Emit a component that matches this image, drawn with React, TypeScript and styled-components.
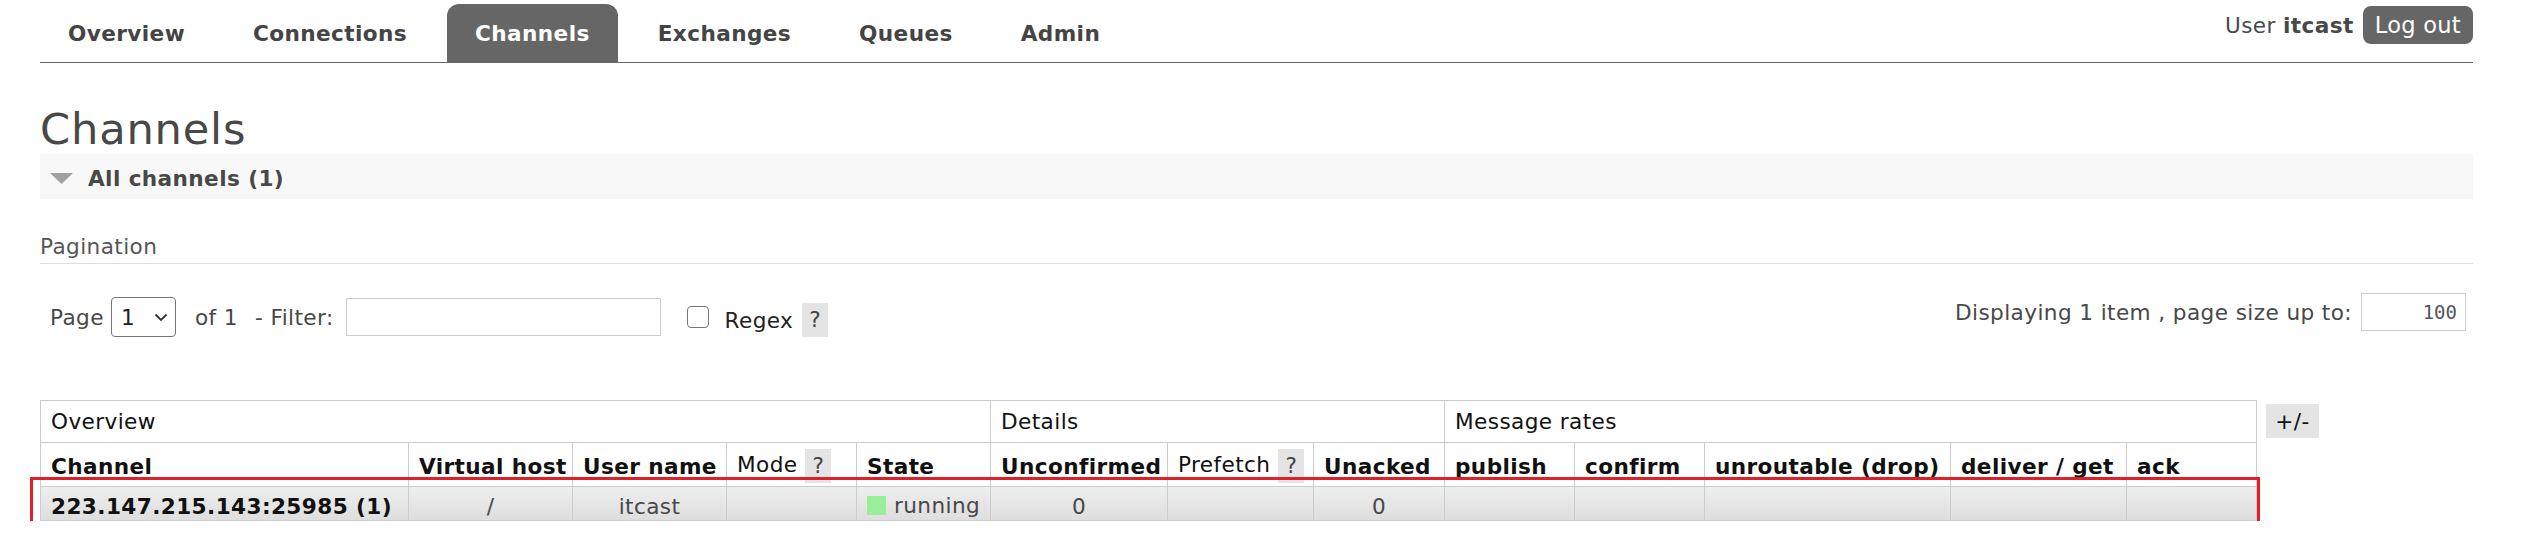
import React from 'react';
import styled, { createGlobalStyle } from 'styled-components';

const GlobalStyle = createGlobalStyle`
  html, body { margin: 0; padding: 0; background: #fff; }
  body {
    font-family: "DejaVu Sans", Verdana, sans-serif;
    font-size: 21.6px;
    letter-spacing: 0.4px;
    color: #484848;
  }
  * { box-sizing: border-box; }
`;

const Page = styled.div`
  width: 2536px;
  padding: 0 63px 0 40px;
`;

const Header = styled.header`
  display: flex;
  justify-content: space-between;
  align-items: flex-start;
  padding-top: 4px;
  border-bottom: 1px solid #666;
`;

const Menu = styled.nav`
  display: flex;
  gap: 12px;
`;

const MenuItem = styled.a<{ $active?: boolean }>`
  display: block;
  padding: 17px 28px 16px;
  line-height: 25px;
  font-weight: bold;
  color: ${(p) => (p.$active ? '#fff' : '#444')};
  background: ${(p) => (p.$active ? '#666' : 'transparent')};
  border-radius: 12px 12px 0 0;
  text-decoration: none;
`;

const UserBox = styled.div`
  display: flex;
  align-items: center;
  gap: 9px;
  margin-top: 2px;
  line-height: 25px;
`;

const UserName = styled.b`
  font-weight: bold;
`;

const LogoutButton = styled.button`
  font-family: inherit;
  font-size: 22.5px;
  letter-spacing: 0.3px;
  color: #fff;
  background: #666;
  border: none;
  border-radius: 8px;
  height: 38px;
  padding: 0 12px;
`;

const Title = styled.h1`
  font-size: 43.2px;
  letter-spacing: 0.8px;
  font-weight: normal;
  line-height: 50px;
  margin: 41px 0 0;
  color: #484848;
`;

const SectionTitle = styled.h2`
  display: flex;
  align-items: center;
  gap: 15px;
  margin: 0;
  padding: 12px 10px 8px 10px;
  background: #f8f8f8;
  font-size: 21.6px;
  line-height: 25px;
  font-weight: bold;
  color: #484848;
`;

const SubTitle = styled.h3`
  margin: 35px 0 0;
  padding-bottom: 4px;
  border-bottom: 1px solid #ddd;
  font-size: 21.6px;
  line-height: 25px;
  font-weight: normal;
  color: #555;
`;

const PagerRow = styled.div`
  display: flex;
  justify-content: space-between;
  align-items: flex-start;
  margin-top: 29px;
`;

const PagerLeft = styled.div`
  display: flex;
  align-items: center;
  padding: 4px 0 0 10px;
  height: 44px;
`;

const RegexGroup = styled.div`
  display: flex;
  align-items: center;
  padding-top: 6px;
`;

const PagerRight = styled.div`
  display: flex;
  align-items: center;
  gap: 9px;
  padding-right: 7px;
`;

const Label = styled.span<{ $ml?: number; $dark?: boolean }>`
  margin-left: ${(p) => p.$ml ?? 0}px;
  line-height: 25px;
  white-space: pre;
  color: ${(p) => (p.$dark ? '#222' : 'inherit')};
`;

const FakeSelect = styled.div`
  display: flex;
  align-items: center;
  justify-content: space-between;
  width: 65px;
  height: 40px;
  margin-left: 7px;
  padding: 0 7px 0 9px;
  border: 1px solid #767676;
  border-radius: 4px;
  color: #222;
`;

const TextInput = styled.div<{ $w: number; $h: number; $ml?: number; $align?: string }>`
  width: ${(p) => p.$w}px;
  height: ${(p) => p.$h}px;
  margin-left: ${(p) => p.$ml ?? 0}px;
  border: 1px solid #ccc;
  text-align: ${(p) => p.$align ?? 'left'};
  padding: 0 8px;
  font-family: "DejaVu Sans Mono", monospace;
  font-size: 19px;
  letter-spacing: 0;
  line-height: 36px;
  color: #555;
`;

const Checkbox = styled.span`
  display: inline-block;
  width: 22px;
  height: 22px;
  margin: 0 0 6px 26px;
  border: 1.5px solid #767676;
  border-radius: 4px;
  background: #fff;
`;

const Help = styled.span<{ $ml?: number }>`
  display: inline-block;
  margin-left: ${(p) => p.$ml ?? 8}px;
  padding: 0 7px;
  height: 34px;
  line-height: 34px;
  background: #e4e4e4;
  color: #444;
  font-weight: normal;
  vertical-align: middle;
`;

const TableArea = styled.div`
  display: flex;
  align-items: flex-start;
  margin-top: 63px;
`;

const TableWrap = styled.div`
  position: relative;
`;

const List = styled.table`
  border-collapse: collapse;
  table-layout: fixed;
  width: 2216px;
`;

const GroupCell = styled.th`
  border: 1px solid #ccc;
  height: 42px;
  padding: 0 10px;
  text-align: left;
  font-weight: normal;
  color: #111;
  vertical-align: middle;
  white-space: nowrap;
`;

const HeadCell = styled.th<{ $normal?: boolean }>`
  border: 1px solid #ccc;
  height: 44px;
  padding: 3px 8px 0 10px;
  text-align: left;
  font-weight: ${(p) => (p.$normal ? 'normal' : 'bold')};
  color: #111;
  vertical-align: middle;
  white-space: nowrap;
`;

const DataRow = styled.tr`
  background: linear-gradient(to bottom, #eee, #ddd);
`;

const DataCell = styled.td<{ $center?: boolean; $strong?: boolean }>`
  border: 1px solid #ccc;
  height: 33px;
  padding: 6px 10px 0;
  text-align: ${(p) => (p.$center ? 'center' : 'left')};
  font-weight: ${(p) => (p.$strong ? 'bold' : 'normal')};
  color: ${(p) => (p.$strong ? '#111' : '#484848')};
  vertical-align: middle;
  white-space: nowrap;
`;

const StateBox = styled.span`
  display: inline-flex;
  align-items: center;
  gap: 8px;
`;

const StateDot = styled.span`
  display: inline-block;
  width: 19px;
  height: 19px;
  background: #99ee99;
`;

const PlusMinus = styled.button`
  margin: 4px 0 0 9px;
  width: 53px;
  height: 34px;
  border: none;
  background: #e4e4e4;
  font-family: inherit;
  font-size: 21.6px;
  letter-spacing: 0.4px;
  color: #111;
  padding: 0;
`;

const Highlight = styled.div`
  position: absolute;
  left: -10px;
  top: 77px;
  width: 2230px;
  height: 47px;
  border: 3.5px solid #e41e26;
  pointer-events: none;
`;

const colWidths = [368, 164, 154, 130, 134, 177, 146, 131, 130, 130, 246, 176, 130];

const tabs = ['Overview', 'Connections', 'Channels', 'Exchanges', 'Queues', 'Admin'];

export default function App() {
  return (
    <>
      <GlobalStyle />
      <Page>
        <Header>
          <Menu>
            {tabs.map((t) => (
              <MenuItem key={t} $active={t === 'Channels'}>
                {t}
              </MenuItem>
            ))}
          </Menu>
          <UserBox>
            <span>
              User <UserName>itcast</UserName>
            </span>
            <LogoutButton>Log out</LogoutButton>
          </UserBox>
        </Header>

        <Title>Channels</Title>
        <SectionTitle>
          <svg width="23" height="11" viewBox="0 0 23 11">
            <polygon points="0,0 23,0 11.5,11" fill="#a0a0a0" />
          </svg>
          <span>All channels (1)</span>
        </SectionTitle>

        <SubTitle>Pagination</SubTitle>
        <PagerRow>
          <PagerLeft>
            <Label>Page</Label>
            <FakeSelect>
              <span>1</span>
              <svg width="14" height="9" viewBox="0 0 14 9">
                <polyline points="1.5,1.5 7,7 12.5,1.5" fill="none" stroke="#333" strokeWidth="1.8" />
              </svg>
            </FakeSelect>
            <Label $ml={19}>of 1</Label>
            <Label $ml={17}>- Filter:</Label>
            <TextInput $w={315} $h={38} $ml={12} />
            <RegexGroup>
              <Checkbox />
              <Label $ml={16} $dark>Regex</Label>
              <Help $ml={9}>?</Help>
            </RegexGroup>
          </PagerLeft>
          <PagerRight>
            <Label>Displaying 1 item , page size up to:</Label>
            <TextInput $w={105} $h={38} $align="right">
              100
            </TextInput>
          </PagerRight>
        </PagerRow>

        <TableArea>
          <TableWrap>
            <List>
              <colgroup>
                {colWidths.map((w, i) => (
                  <col key={i} style={{ width: w }} />
                ))}
              </colgroup>
              <thead>
                <tr>
                  <GroupCell colSpan={5}>Overview</GroupCell>
                  <GroupCell colSpan={3}>Details</GroupCell>
                  <GroupCell colSpan={5}>Message rates</GroupCell>
                </tr>
                <tr>
                  <HeadCell>Channel</HeadCell>
                  <HeadCell>Virtual host</HeadCell>
                  <HeadCell>User name</HeadCell>
                  <HeadCell $normal>
                    Mode<Help>?</Help>
                  </HeadCell>
                  <HeadCell>State</HeadCell>
                  <HeadCell>Unconfirmed</HeadCell>
                  <HeadCell $normal>
                    Prefetch<Help>?</Help>
                  </HeadCell>
                  <HeadCell>Unacked</HeadCell>
                  <HeadCell>publish</HeadCell>
                  <HeadCell>confirm</HeadCell>
                  <HeadCell>unroutable (drop)</HeadCell>
                  <HeadCell>deliver / get</HeadCell>
                  <HeadCell>ack</HeadCell>
                </tr>
              </thead>
              <tbody>
                <DataRow>
                  <DataCell $strong>223.147.215.143:25985 (1)</DataCell>
                  <DataCell $center>/</DataCell>
                  <DataCell $center>itcast</DataCell>
                  <DataCell />
                  <DataCell>
                    <StateBox>
                      <StateDot />
                      running
                    </StateBox>
                  </DataCell>
                  <DataCell $center>0</DataCell>
                  <DataCell />
                  <DataCell $center>0</DataCell>
                  <DataCell />
                  <DataCell />
                  <DataCell />
                  <DataCell />
                  <DataCell />
                </DataRow>
              </tbody>
            </List>
            <Highlight />
          </TableWrap>
          <PlusMinus>+/-</PlusMinus>
        </TableArea>
      </Page>
    </>
  );
}
